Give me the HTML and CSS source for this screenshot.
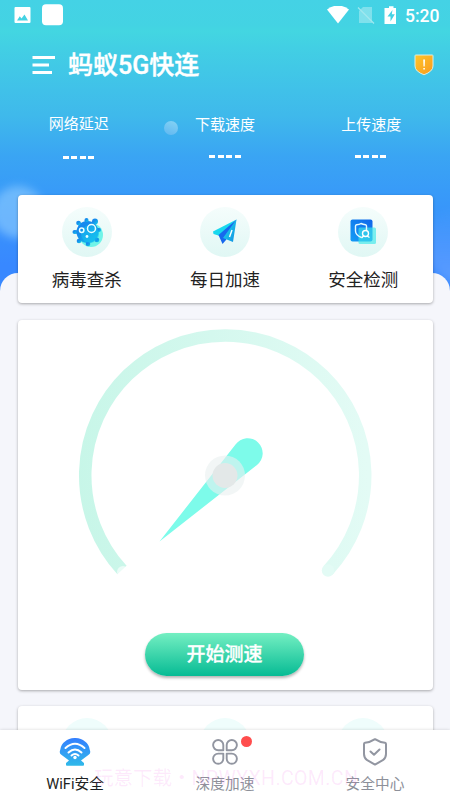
FILE: index.html
```html
<!DOCTYPE html>
<html lang="zh-CN">
<head>
<meta charset="utf-8">
<title>蚂蚁5G快连</title>
<link rel="stylesheet" href="styles.css">
</head>
<body>
<div class="app">
  <div class="glow glow-left"></div>
  <div class="glow glow-right"></div>
  <div class="bubble"></div>

  <header class="hero">
    <div class="status">
      <svg class="status-left" width="52" height="24" viewBox="0 0 52 24">
        <path fill="#fff" fill-rule="evenodd" d="M1.500 3h14q1 0 1 1v14q0 1-1 1H1.500q-1 0-1-1V4q0-1 1-1zM3 16.500h11l-3.500-6-3 4-1.700-2.200z"/>
        <rect x="28" y="0.300" width="21" height="21" rx="4" fill="#fff"/>
      </svg>
      <svg class="status-right" width="72" height="24" viewBox="0 0 72 24">
        <path fill="#fff" d="M0 3.500Q11-4.500 22 3.500L11 17.500z"/>
        <path fill="#fff" opacity=".32" d="M36 1h9v16H32V5z"/>
        <path stroke="#a0e8ef" stroke-width="1.300" d="M31 1.500l16 16"/>
        <path fill="#fff" fill-rule="evenodd" d="M60 2h2V.3h4.500V2H69v16H57.500V2zM65.500 4l-5 6.500h3v5l4.300-7.300h-3z"/>
      </svg>
      <span class="clock">5:20</span>
    </div>
    <div class="title-row">
      <svg width="24" height="20" viewBox="0 0 24 20" fill="#fff"><path d="M.5 1H23v3H.500zM.5 8.500H17v3H.5zM.5 16H20v3H.5z"/></svg>
      <h1>蚂蚁5G快连</h1>
      <svg class="warn" width="20" height="22" viewBox="0 0 20 22">
        <defs><linearGradient id="warn" x1="0" y1="0" x2="1" y2="1"><stop stop-color="#ffc629"/><stop offset="1" stop-color="#f99a20"/></linearGradient></defs>
        <path d="M1.700 1h16.600q.7 0 .7.700V12q0 5.500-9 8.800Q1 17.500 1 12V1.700Q1 1 1.700 1z" fill="url(#warn)" stroke="#d9efe4"/>
        <path d="M9.200 5.500h1.800l-.3 7h-1.200zM9.300 14h1.600v1.600H9.300z" fill="#fff"/>
      </svg>
    </div>
    <div class="stats">
      <div class="stat stat-first"><span>网络延迟</span><i></i></div>
      <div class="stat"><span>下载速度</span><i></i></div>
      <div class="stat"><span>上传速度</span><i></i></div>
    </div>
  </header>

  <main class="sheet">
    <section class="card tools">
      <div class="tool">
        <div class="disc">
          <svg width="50" height="50" viewBox="0 0 50 50">
            <defs><linearGradient id="virus" x1="0" y1="0" x2=".8" y2="1"><stop stop-color="#1684f4"/><stop offset=".45" stop-color="#158eea"/><stop offset="1" stop-color="#13c7ea"/></linearGradient></defs>
            <circle cx="29" cy="28" r="12" fill="#70f4e8"/>
            <path fill="none" stroke="#1684ec" stroke-width="3.500" d="M24.500 13v5M33 14.500l-3 5M37 23h-5M35 33l-4-4M17 34l3-4M12.500 25h5M16.500 16l4 4"/>
            <g fill="url(#virus)">
              <circle cx="25.500" cy="25" r="11"/>
              <circle cx="24.500" cy="13" r="2"/><circle cx="33" cy="14.500" r="3"/><circle cx="37" cy="23" r="2"/><circle cx="35" cy="33" r="2.300"/><circle cx="26" cy="37" r="2.300"/><circle cx="17" cy="34" r="2.300"/><circle cx="12.500" cy="25" r="2"/><circle cx="16.500" cy="16" r="2.300"/>
            </g>
            <circle cx="28" cy="27" r="9" fill="#16bff0" opacity=".55"/>
            <g fill="none" stroke="#e9ffff" stroke-width="1.500"><circle cx="29.500" cy="21.500" r="4"/><circle cx="19.700" cy="23.300" r="2.200"/></g>
            <circle cx="25" cy="29.500" r="1.400" fill="#e9ffff"/>
          </svg>
        </div>
        <span>病毒查杀</span>
      </div>
      <div class="tool">
        <div class="disc">
          <svg width="50" height="50" viewBox="0 0 50 50">
            <defs><linearGradient id="plane" x1="0" y1="0" x2="1" y2="1"><stop stop-color="#1de3ee"/><stop offset="1" stop-color="#138ce2"/></linearGradient></defs>
            <path d="M36.500 12.500L13 24.500l.5 2.500L20 29z" fill="#18d8ee"/>
            <path d="M36.500 12.500L18.500 28l4 9 3.500-4z" fill="#1768ed"/>
            <path d="M36.500 12.500L23 31l10 4z" fill="url(#plane)"/>
            <path d="M32 23l-2.500 7" stroke="#fff" stroke-width="1.400"/>
          </svg>
        </div>
        <span>每日加速</span>
      </div>
      <div class="tool">
        <div class="disc">
          <svg width="50" height="50" viewBox="0 0 50 50">
            <defs><linearGradient id="scan" x1="1" y1="0" x2="0" y2="1"><stop stop-color="#1166ea"/><stop offset="1" stop-color="#139cf5"/></linearGradient></defs>
            <rect x="12.500" y="12.500" width="22" height="22" rx="2" fill="url(#scan)"/>
            <rect x="20.500" y="20.500" width="17.500" height="16.500" rx="1.500" fill="#3ee8e9" opacity=".65"/>
            <path d="M23.500 30.500c-3.800-1.500-6-3.300-6-6.500v-5q0-1 1-1.200 3-.3 4.500-1.300 2 1 4.500 1.300 1 .2 1 1.200V23" fill="none" stroke="#e4f9ff" stroke-width="1.400"/>
            <circle cx="27.500" cy="26.500" r="3" fill="none" stroke="#fff" stroke-width="1.400"/>
            <path d="M23.500 31l2.500-2.500M29 29l2.500 1.500" stroke="#fff" stroke-width="1.400"/>
          </svg>
        </div>
        <span>安全检测</span>
      </div>
    </section>

    <section class="card meter">
      <svg class="dial" width="300" height="260" viewBox="75 325 300 260">
        <defs><linearGradient id="arc" x1="79" y1="540" x2="371" y2="520" gradientUnits="userSpaceOnUse"><stop stop-color="#c7f6e8"/><stop offset=".5" stop-color="#d4f8ee"/><stop offset="1" stop-color="#e3fbf5"/></linearGradient></defs>
        <path d="M122 570A140 140 0 1 1 328 570.500" fill="none" stroke="url(#arc)" stroke-width="12.500"/>
        <circle cx="328" cy="570.500" r="6.200" fill="#e3fbf5"/>
        <circle cx="123" cy="572" r="6" fill="#fff" opacity=".6"/>
        <path d="M159.500 541.500L235.500 444.500A15 15 0 1 1 257 465z" fill="#7dfbea"/>
        <circle cx="225" cy="475.500" r="20" fill="#e9f0f0" opacity=".6"/>
        <circle cx="225" cy="475.500" r="12.500" fill="#e3e8e8"/>
      </svg>
      <button class="start">开始测速</button>
    </section>

    <section class="card more">
      <i></i><i></i><i></i>
    </section>
  </main>

  <nav class="tabs">
    <div class="tab active">
      <svg width="32" height="30" viewBox="0 0 32 30">
        <defs><linearGradient id="shell" x1="0" y1="0" x2="0" y2="1"><stop stop-color="#347fff"/><stop offset="1" stop-color="#2fb9e9"/></linearGradient></defs>
        <path d="M7 28v-2l3-2.500-8-6Q0 16 1.200 13 2 7 6 4.500 10 .8 16 1q6-.2 10 3.500 4 2.500 4.800 8.500 1.200 3-.8 4.500l-8 6 3 2.500v2q0 .7-1 .7H8q-1 0-1-.7z" fill="url(#shell)"/>
        <g fill="none" stroke="#fff" stroke-width="2" stroke-linecap="round"><path d="M6.500 11q9.500-8.500 19 0M9.500 15.500q6.500-6 13 0M12.500 18.500q3.500-3 7 0"/></g>
        <circle cx="16" cy="20.500" r="1.700" fill="#fff"/>
      </svg>
      <span>WiFi安全</span>
    </div>
    <div class="tab">
      <svg width="32" height="30" viewBox="0 0 32 30" fill="none" stroke="#9296a1" stroke-width="1.900" stroke-linejoin="round">
        <path d="M14.300 13.200V8.100A5.100 5.100 0 1 0 9.200 13.200zM17.700 13.200V8.100A5.100 5.100 0 1 1 22.800 13.200zM14.300 16.600V21.700A5.100 5.100 0 1 1 9.200 16.600zM17.700 16.600V21.700A5.100 5.100 0 1 0 22.800 16.600z"/>
      </svg>
      <b class="dot"></b>
      <span>深度加速</span>
    </div>
    <div class="tab">
      <svg width="32" height="30" viewBox="0 0 32 30" fill="none" stroke="#9296a1" stroke-width="2" stroke-linejoin="round" stroke-linecap="round">
        <path d="M16 2.200Q20.500 5.200 26 5.800 27 6 27 7v10q0 4-3.200 6.200L16 27.600l-7.800-4.400Q5 21 5 17V7q0-1 1-1.200Q11.500 5.200 16 2.200zM11.500 14.500l3.500 3.300 5.500-5.300"/>
      </svg>
      <span>安全中心</span>
    </div>
    <div class="watermark">玩意下载・<span>NPWYXH.COM.CN</span></div>
  </nav>
</div>
</body>
</html>
```

FILE: styles.css
```css
* { box-sizing: border-box; }
body { margin: 0; font-family: Roboto, "Noto Sans CJK SC", sans-serif; }
h1, i, b { margin: 0; font-style: normal; }
svg { display: block; }
.app {
  position: relative;
  width: 450px;
  height: 800px;
  overflow: hidden;
  display: flex;
  flex-direction: column;
  background: linear-gradient(#44d2e5 0, #43d3e3 26px, #43d6e1 31px, #42cfe4 48px, #40c1e9 90px, #3fb9eb 115px, #3aa5f3 155px, #389bf8 190px, #3888ff 265px, #3888ff 310px);
}
.glow, .bubble { position: absolute; border-radius: 50%; }
.glow-left { left: -8px; top: 186px; width: 52px; height: 52px; background: #91ceff; opacity: .6; filter: blur(4px); }
.glow-right { left: 425px; top: 205px; width: 80px; height: 80px; background: linear-gradient(transparent, #8abaff); opacity: .45; filter: blur(5px); }
.bubble { left: 164px; top: 121px; width: 14px; height: 14px; background: linear-gradient(200deg, #86d3f4, #5fb7f1); }
.hero { position: relative; height: 273px; flex: none; color: #fff; }
.status { display: flex; height: 30px; padding: 4px 9px 0 14px; }
.status-right { margin-left: auto; margin-top: 2px; }
.clock { width: 36px; margin-left: 6px; font-size: 17.500px; font-weight: 500; line-height: 24px; white-space: nowrap; }
.title-row { display: flex; align-items: center; height: 70px; padding: 0 16px 0 32px; }
h1 { position: relative; top: 1px; margin-left: 12px; font-size: 25px; line-height: 36px; font-weight: 500; -webkit-text-stroke: .4px #fff; }
.warn { margin-left: auto; }
.stats { display: grid; grid-template-columns: repeat(3, 146.300px); padding: 15px 0 0 5.500px; }
.stat { display: flex; flex-direction: column; align-items: center; font-size: 15px; line-height: 20px; }
.stat-first span { position: relative; top: -1px; }
.stat i { width: 32px; height: 3px; margin-top: 20px; background: repeating-linear-gradient(90deg, #fff 0 6px, transparent 6px 8.500px); }
.stat-first i { margin-top: 21px; }
.sheet {
  position: relative;
  flex: 1;
  min-height: 0;
  overflow: visible;
  padding: 0 17.500px;
  background: #f5f6fb;
  border-radius: 18px 18px 0 0;
}
.card { background: #fff; border-radius: 4px; box-shadow: 0 1px 3px rgba(0, 0, 0, .32); }
.tools { display: grid; grid-template-columns: repeat(3, 1fr); height: 108px; margin-top: -78px; padding-top: 12px; }
.tool { display: flex; flex-direction: column; align-items: center; font-size: 17.500px; line-height: 26px; color: #222; }
.disc { width: 50px; height: 50px; border-radius: 50%; background: linear-gradient(#f5fdfc, #e0f7f4); margin-bottom: 10px; }
.meter { height: 370px; margin-top: 16.500px; padding-top: 5px; display: flex; flex-direction: column; align-items: center; }
.start {
  width: 159px;
  height: 43px;
  margin-top: 48px;
  margin-right: 1px;
  padding: 1px 0 0;
  border: 0;
  border-radius: 22px;
  color: #fff;
  font: 500 19px/42px Roboto, "Noto Sans CJK SC", sans-serif;
  -webkit-text-stroke: .3px #fff;
  background: linear-gradient(#74efc2, #06bb94);
  box-shadow: 0 2px 3px rgba(0, 0, 0, .3);
}
.more { display: grid; grid-template-columns: repeat(3, 1fr); justify-items: center; height: 108px; margin-top: 16.500px; padding-top: 12px; }
.more i { width: 50px; height: 50px; border-radius: 50%; background: #effdfc; }
.tabs {
  position: relative;
  flex: none;
  display: grid;
  grid-template-columns: repeat(3, 1fr);
  height: 70px;
  padding-top: 7px;
  background: #fff;
  box-shadow: 0 0 3px rgba(0, 0, 0, .16);
}
.tab { position: relative; display: flex; flex-direction: column; align-items: center; font-size: 14.700px; line-height: 20px; color: #8d9099; }
.tab span { margin-top: 7px; }
.active { color: #1e1f22; }
.dot { position: absolute; left: 91px; top: -1px; width: 11px; height: 11px; border-radius: 50%; background: #ff4d4d; }
.watermark { position: absolute; left: 94px; top: 36px; font-size: 19.500px; line-height: 26px; color: rgba(240, 80, 225, .12); white-space: nowrap; }
.watermark span { letter-spacing: .4px; }
```
